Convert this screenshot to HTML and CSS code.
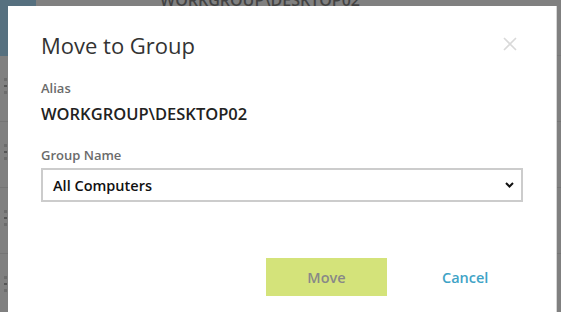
FILE: index.html
```html
<!DOCTYPE html>
<html>
<head>
<meta charset="utf-8">
<link rel="stylesheet" href="styles.css">
</head>
<body>
<div class="page">
  <div class="topbar">
    <div class="brand"></div>
    <div class="crumb">WORKGROUP\DESKTOP02</div>
  </div>
  <div class="rows">
    <div class="row"><span class="grip"><i></i><i></i><i></i></span></div>
    <div class="row"><span class="grip"><i></i><i></i><i></i></span></div>
    <div class="row"><span class="grip"><i></i><i></i><i></i></span></div>
    <div class="row"><span class="grip"><i></i><i></i><i></i></span></div>
  </div>
</div>

<div class="modal">
  <div class="modal-head">
    <h1 class="title">Move to Group</h1>
    <button class="close" aria-label="Close">
      <svg width="14" height="14" viewBox="0 0 14 14"><path d="M1 1L13 13M13 1L1 13" stroke="#d9d9d9" stroke-width="1.6" fill="none"/></svg>
    </button>
  </div>
  <div class="field">
    <div class="label">Alias</div>
    <div class="value">WORKGROUP\DESKTOP02</div>
  </div>
  <div class="field group">
    <div class="label">Group Name</div>
    <div class="select">
      <span>All Computers</span>
      <svg width="9" height="6" viewBox="0 0 9 6"><path d="M1 1L4.5 4.5L8 1" stroke="#111" stroke-width="2" fill="none"/></svg>
    </div>
  </div>
  <div class="actions">
    <button class="btn-move">Move</button>
    <button class="btn-cancel">Cancel</button>
  </div>
</div>
</body>
</html>
```
FILE: styles.css
```css
* { box-sizing: border-box; }
html, body { margin: 0; padding: 0; }
body {
  width: 561px;
  height: 312px;
  overflow: hidden;
  background: #808080;
  font-family: "Open Sans", "Noto Sans", sans-serif;
  position: relative;
}
.page { width: 561px; }
.topbar {
  display: flex;
  height: 56px;
  border-bottom: 1px solid #787878;
}
.brand { width: 36px; height: 56px; background: #56707f; }
.crumb {
  margin-left: 124px;
  margin-top: -11px;
  font-size: 16px;
  font-weight: 600;
  color: #1a1a1a;
  opacity: 0.6;
}
.rows { display: flex; flex-direction: column; }
.row {
  height: 66px;
  border-bottom: 1px solid #757575;
  padding-top: 22px;
  padding-left: 4px;
}
.grip { display: flex; flex-direction: column; gap: 4px; width: 3px; }
.grip i { display: block; height: 3px; background: #6c6c6c; }
.grip i:nth-child(2) { background: #555; height: 2px; }

.modal {
  position: absolute;
  left: 8px;
  top: 6px;
  width: 549px;
  height: 330px;
  background: #fff;
  border-right: 1px solid #d6d6d6;
  padding: 0 33px;
}
.modal-head {
  display: flex;
  justify-content: space-between;
  align-items: flex-start;
  padding-top: 25px;
}
.title {
  margin: 0;
  font-size: 22px;
  font-weight: 400;
  color: #333;
  line-height: 28px;
}
.close {
  background: none;
  border: 0;
  padding: 0;
  margin-top: 6px;
  margin-right: 6px;
  width: 14px;
  height: 14px;
  display: flex;
}
.field { margin-top: 20px; }
.label {
  font-size: 13px;
  font-weight: 600;
  color: #6b6b6b;
  line-height: 18px;
}
.value {
  margin-top: 6px;
  font-size: 16.5px;
  font-weight: 600;
  color: #222;
  line-height: 22px;
}
.group { margin-top: 21px; }
.select {
  margin-top: 4px;
  width: 482px;
  height: 34px;
  border: 2px solid #cccccc;
  display: flex;
  align-items: center;
  justify-content: space-between;
  padding: 0 7px 0 10px;
  font-size: 14.5px;
  font-weight: 600;
  color: #111;
}
.actions {
  display: flex;
  align-items: center;
  margin-top: 56px;
  padding-left: 225px;
}
.btn-move {
  width: 121px;
  height: 38px;
  border: 0;
  background: #d4e37a;
  color: #888;
  font-family: inherit;
  font-size: 14.5px;
  font-weight: 600;
}
.btn-cancel {
  margin-left: 55px;
  border: 0;
  background: none;
  padding: 0;
  color: #3ea3c6;
  font-family: inherit;
  font-size: 14.5px;
  font-weight: 600;
}
```
